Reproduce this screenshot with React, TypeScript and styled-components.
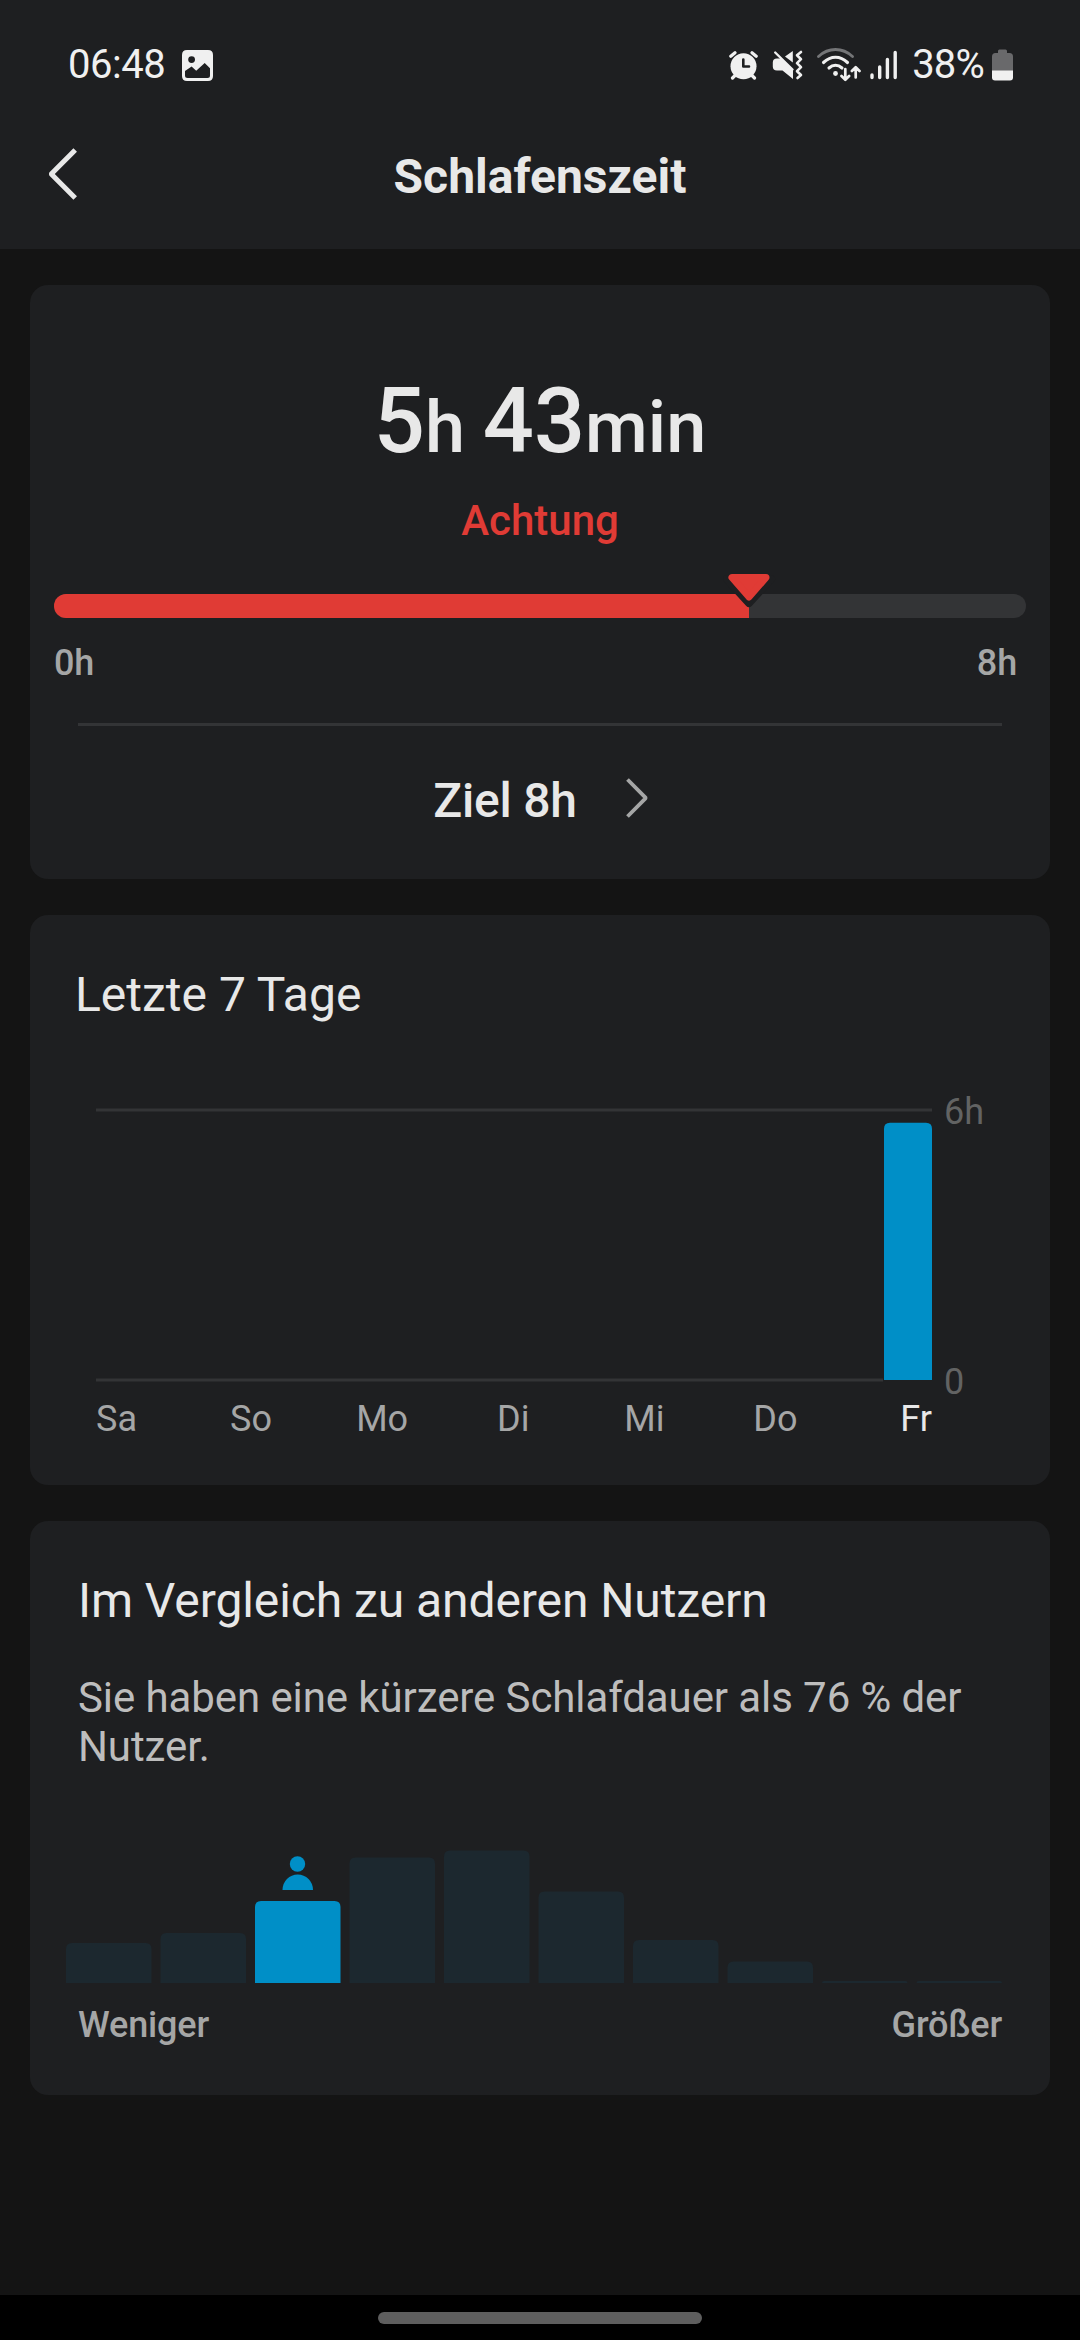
import React from "react";
import styled, { createGlobalStyle } from "styled-components";

const color = {
  page: "#141414",
  surface: "#1e1f21",
  line: "#333436",
  text: "#e8e8e8",
  status: "#f0f0f0",
  muted: "#a5a6a6",
  faint: "#626363",
  alert: "#e03b35",
  accent: "#008fc7",
  accentDim: "#1c282f",
};

const GlobalStyle = createGlobalStyle`
  body {
    margin: 0;
    background: ${color.page};
    font-family: Roboto, "Noto Sans", sans-serif;
    color: ${color.text};
  }
  svg { display: block; flex: none; }
`;

const Screen = styled.div`
  width: 1080px;
  height: 2340px;
  display: flex;
  flex-direction: column;
  overflow: hidden;
`;

const TopArea = styled.header`
  height: 249px;
  background: ${color.surface};
`;

const StatusBar = styled.div`
  height: 130px;
  box-sizing: border-box;
  padding: 0 67px 0 68px;
  display: flex;
  align-items: center;
  justify-content: space-between;
  color: ${color.status};
`;

const StatusGroup = styled.div<{ $gap?: number }>`
  display: flex;
  align-items: center;
  gap: ${(p) => p.$gap ?? 0}px;
`;

const StatusText = styled.span<{ $size: number; $spacing?: number }>`
  font-size: ${(p) => p.$size}px;
  line-height: 48px;
  letter-spacing: ${(p) => p.$spacing ?? 0}px;
`;

const TitleBar = styled.div`
  height: 94px;
  padding: 0 48px;
  display: grid;
  grid-template-columns: 30px 1fr 30px;
  align-items: center;
`;

const BackButton = styled.button`
  border: 0;
  padding: 0 0 6px;
  background: none;
  color: inherit;
`;

const PageTitle = styled.h1`
  margin: 0;
  text-align: center;
  font-size: 48px;
  font-weight: 700;
  line-height: 56px;
`;

const Content = styled.main`
  flex: 1;
  padding: 36px 30px 0;
  display: flex;
  flex-direction: column;
  gap: 36px;
`;

const Card = styled.section<{ $height: number; $bottom?: number }>`
  height: ${(p) => p.$height}px;
  padding-bottom: ${(p) => p.$bottom ?? 0}px;
  box-sizing: border-box;
  border-radius: 18px;
  background: ${color.surface};
  display: flex;
  flex-direction: column;
`;

const Duration = styled.div`
  margin-top: 84px;
  text-align: center;
  font-size: 90px;
  font-weight: 500;
  line-height: 106px;
  height: 106px;
`;

const Unit = styled.span`
  font-size: 72px;
`;

const Rating = styled.div`
  margin-top: 21px;
  text-align: center;
  font-size: 42px;
  font-weight: 500;
  line-height: 50px;
  color: ${color.alert};
`;

const Track = styled.div`
  position: relative;
  margin: 48px 24px 0;
  height: 24px;
  border-radius: 12px;
  background: ${color.line};
`;

const TrackFill = styled.div`
  height: 100%;
  border-radius: 12px 0 0 12px;
  background: ${color.alert};
`;

const Marker = styled.svg`
  position: absolute;
  top: -24px;
  transform: translateX(-50%);
`;

const Ends = styled.div<{ $top: number; $left: number; $right: number }>`
  margin: ${(p) => `${p.$top}px ${p.$right}px 0 ${p.$left}px`};
  display: flex;
  justify-content: space-between;
  font-size: 36px;
  font-weight: 500;
  line-height: 42px;
  letter-spacing: -0.15px;
  color: ${color.muted};
`;

const Divider = styled.hr`
  width: 924px;
  height: 3px;
  margin: 39px auto 0;
  border: 0;
  background: ${color.line};
`;

const GoalRow = styled.div`
  height: 149px;
  padding-left: 2px;
  display: flex;
  align-items: center;
  justify-content: center;
  gap: 48px;
  font-size: 48px;
  font-weight: 500;
  letter-spacing: -0.2px;
  color: ${color.text};

  svg { margin-bottom: 4px; }
`;

const CardTitle = styled.h2<{ $left: number; $spacing?: number }>`
  margin: 52px 0 0 ${(p) => p.$left}px;
  font-size: 48px;
  font-weight: 400;
  line-height: 56px;
  letter-spacing: ${(p) => p.$spacing ?? 0}px;
`;

const ChartRow = styled.div`
  margin: 68px 0 0 66px;
  height: 312px;
  display: flex;
  gap: 12px;
`;

const Axis = styled.div`
  display: flex;
  flex-direction: column;
  justify-content: space-between;
  font-size: 36px;
  line-height: 42px;
  color: ${color.faint};
`;

const Days = styled.div`
  margin: -5px 0 0 66px;
  width: 836px;
  display: grid;
  grid-template-columns: 89.5px repeat(5, 131.1px) 91px;
`;

const Day = styled.span<{ $align: string; $active: boolean }>`
  text-align: ${(p) => p.$align};
  font-size: 36px;
  line-height: 42px;
  color: ${(p) => (p.$active ? color.text : color.muted)};
`;

const Summary = styled.p`
  margin: 44px 40px 0 48px;
  font-size: 42px;
  line-height: 49px;
  letter-spacing: -0.09px;
  color: #bdbdbd;
`;

const Histogram = styled.svg`
  margin: auto 0 0 36px;
`;

const NavBar = styled.footer`
  height: 45px;
  background: #000;
  display: flex;
  justify-content: center;
  align-items: center;
`;

const NavPill = styled.div`
  width: 324px;
  height: 12px;
  border-radius: 6px;
  background: #5e5e5e;
`;

const PictureIcon = () => (
  <svg width="31" height="31" viewBox="0 0 31 31">
    <path
      fill="currentColor"
      fillRule="evenodd"
      d="M5 0H26Q31 0 31 5V26Q31 31 26 31H5Q0 31 0 26V5Q0 0 5 0ZM9.6 6.2A3.4 3.4 0 1 0 9.6 13A3.4 3.4 0 1 0 9.6 6.2ZM3 21V25.5Q3 28 5.500 28H25.500Q28 28 28 25.500V18.200L22.700 13L14.200 20.700L9.600 16.500Z"
    />
  </svg>
);

const AlarmIcon = () => (
  <svg width="29" height="29" viewBox="0 0 29 29" fill="none" stroke="currentColor" strokeLinecap="round">
    <circle cx="14.500" cy="15.200" r="13" fill="currentColor" stroke="none" />
    <path d="M1.800 5.200L6 1.700M27.200 5.200L23 1.700" strokeWidth="3.200" />
    <path d="M6.500 24L3.500 27M22.500 24L25.500 27" strokeWidth="3.200" />
    <path d="M14.300 8.500V15.500H20" stroke={color.surface} strokeWidth="2.600" strokeLinejoin="round" />
  </svg>
);

const MuteIcon = () => (
  <svg width="31" height="30" viewBox="0 0 31 30" fill="none" stroke="currentColor">
    <path d="M5 8.500H9L21 19.500V29L10.500 20.500H5Q0.800 20.500 0.800 16.500V12.500Q0.800 8.500 5 8.500Z" fill="currentColor" stroke="none" />
    <path d="M20.800 1V12.500L13 6.500Z" fill="currentColor" stroke="none" />
    <path d="M3.200 2.500L20.500 19.500" strokeWidth="2.400" strokeLinecap="round" />
    <path d="M29 2L25 5.300L29 9.200L25 13.200L29 17.200L25 21.200L29 25L25.500 28" strokeWidth="2.600" strokeLinecap="round" strokeLinejoin="round" />
  </svg>
);

const WifiIcon = () => (
  <svg width="44" height="34" viewBox="0 0 44 34" fill="none" stroke="currentColor" strokeLinecap="round" strokeLinejoin="round">
    <path d="M1.500 8.500Q9 1.500 18.500 1.500T35.500 8.500" stroke="#747577" strokeWidth="2.800" />
    <path d="M6.500 14.500Q12 9.300 18.500 9.300T30.500 14.500" strokeWidth="3.100" />
    <path d="M12 20Q15 17.300 18.500 17.300T25 20" strokeWidth="3.100" />
    <circle cx="18.500" cy="25.500" r="2.400" fill="currentColor" stroke="none" />
    <path d="M28.300 21V31.500M24.500 28L28.300 31.800L32.100 28M38.700 29.500V19.500M34.900 23L38.700 19.200L42.500 23" strokeWidth="2.700" />
  </svg>
);

const SignalIcon = () => (
  <svg width="28" height="30" viewBox="0 0 28 30" fill="none" stroke="currentColor" strokeWidth="3.400" strokeLinecap="round">
    <path d="M2 25V27.500M9.700 17V27.500M17.400 9.500V27.500M25.200 2.500V27.500" />
  </svg>
);

const BatteryIcon = () => (
  <svg width="21" height="32" viewBox="0 0 21 32">
    <path d="M6 4V2Q6 0.500 7.500 0.500H13.500Q15 0.500 15 2V4H17.500Q21 4 21 7.500V22H0V7.500Q0 4 3.500 4Z" fill="#69696b" />
    <path d="M0 21.500H21V28.500Q21 31.500 18 31.500H3Q0 31.500 0 28.500Z" fill="currentColor" />
  </svg>
);

const hours = 5 + 43 / 60;
const goal = 8;
const days = ["Sa", "So", "Mo", "Di", "Mi", "Do", "Fr"];
const distribution = [40, 50, 82, 125.5, 132.5, 91.5, 43, 21.5, 2, 2];
const ownBucket = 2;

/** Column with rounded top corners only, standing on the given baseline. */
const column = (x: number, base: number, w: number, h: number, radius = 6) => {
  const r = Math.min(radius, h);
  return `M${x} ${base}V${base - h + r}q0 ${-r} ${r} ${-r}H${x + w - r}q${r} 0 ${r} ${r}V${base}Z`;
};

export default function App() {
  const percent = `${(hours / goal) * 100}%`;
  return (
    <Screen>
      <GlobalStyle />
      <TopArea>
        <StatusBar>
          <StatusGroup $gap={17}>
            <StatusText $size={40} $spacing={-0.5}>06:48</StatusText>
            <PictureIcon />
          </StatusGroup>
          <StatusGroup $gap={14}>
            <AlarmIcon />
            <MuteIcon />
            <StatusGroup $gap={9}>
              <WifiIcon />
              <SignalIcon />
            </StatusGroup>
            <StatusGroup $gap={8}>
              <StatusText $size={40} $spacing={-0.8}>38%</StatusText>
              <BatteryIcon />
            </StatusGroup>
          </StatusGroup>
        </StatusBar>
        <TitleBar>
          <BackButton aria-label="Zurück">
            <svg width="30" height="54" viewBox="0 0 30 54" fill="none" stroke="currentColor" strokeWidth="5">
              <path d="M27.200 3L3.500 26.700V27.300L27.200 51" strokeLinejoin="round" />
            </svg>
          </BackButton>
          <PageTitle>Schlafenszeit</PageTitle>
        </TitleBar>
      </TopArea>

      <Content>
        <Card $height={594}>
          <Duration>
            5<Unit>h </Unit>43<Unit>min</Unit>
          </Duration>
          <Rating>Achtung</Rating>
          <Track>
            <TrackFill style={{ width: percent }} />
            <Marker style={{ left: percent }} width="60" height="42" viewBox="0 0 60 42">
              <path d="M8 9L30 33L52 9Z" fill={color.surface} stroke={color.surface} strokeWidth="8" strokeLinejoin="round" />
              <path d="M13 7.500H47L30 27Z" fill={color.alert} stroke={color.alert} strokeWidth="7" strokeLinejoin="round" />
            </Marker>
          </Track>
          <Ends $top={24} $left={24} $right={33}>
            <span>0h</span>
            <span>8h</span>
          </Ends>
          <Divider />
          <GoalRow>
            <span>Ziel 8h</span>
            <svg width="24" height="42" viewBox="0 0 24 42" fill="none" stroke={color.muted} strokeWidth="3.800">
              <path d="M2.500 1.500L20.500 19.700V20.300L2.500 38.500" strokeLinejoin="round" />
            </svg>
          </GoalRow>
        </Card>

        <Card $height={570}>
          <CardTitle $left={45}>Letzte 7 Tage</CardTitle>
          <ChartRow>
            <svg width="836" height="312" viewBox="0 0 836 312">
              <path d="M0 19H836M0 289H787" stroke={color.line} strokeWidth="3" />
              <path d={column(788, 289, 48, (hours / 6) * 270)} fill={color.accent} />
            </svg>
            <Axis>
              <span>6h</span>
              <span>0</span>
            </Axis>
          </ChartRow>
          <Days>
            {days.map((d, i) => (
              <Day key={d} $align={i === 0 ? "left" : i === 6 ? "right" : "center"} $active={i === 6}>
                {d}
              </Day>
            ))}
          </Days>
        </Card>

        <Card $height={574} $bottom={49}>
          <CardTitle $left={48} $spacing={-0.08}>Im Vergleich zu anderen Nutzern</CardTitle>
          <Summary>Sie haben eine kürzere Schlafdauer als 76 % der Nutzer.</Summary>
          <Histogram width="940" height="143" viewBox="0 0 940 143">
            {distribution.map((h, i) => (
              <path key={i} d={column(i * 94.5, 143, 85.5, h)} fill={i === ownBucket ? color.accent : color.accentDim} />
            ))}
            <g fill={color.accent}>
              <circle cx="231.500" cy="24" r="7.700" />
              <path d="M216.500 50A15.200 15.500 0 0 1 247 50Z" />
            </g>
          </Histogram>
          <Ends $top={21} $left={48} $right={48}>
            <span>Weniger</span>
            <span>Größer</span>
          </Ends>
        </Card>
      </Content>

      <NavBar>
        <NavPill />
      </NavBar>
    </Screen>
  );
}
